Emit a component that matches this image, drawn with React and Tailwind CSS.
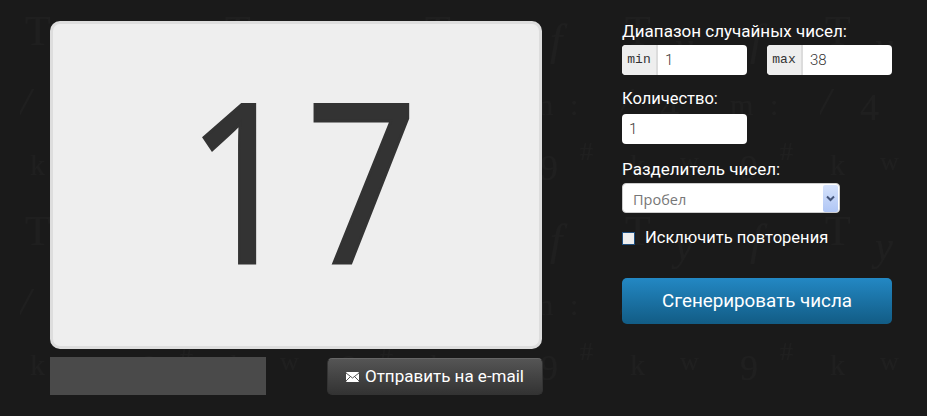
import React from "react";

const uiFont = { fontFamily: '"Roboto", "Noto Sans", sans-serif' };

const NumberField = ({ prefix, value }) => (
  <div className="flex h-[30px] w-[125px] overflow-hidden rounded-[4px] bg-white">
    <span className="flex w-[36px] items-center justify-center border-r-2 border-[#dcdcdc] bg-[#eeeeee] font-['Liberation_Mono',monospace] text-[13px] text-[#333333]">
      {prefix}
    </span>
    <span className="flex flex-1 items-center pl-[7px] text-[15px] font-light text-[#333333]">{value}</span>
  </div>
);

const Label = ({ children }) => (
  <div className="text-[17px] leading-[20px] text-white">{children}</div>
);

// faint glyph wallpaper, tile repeats every 200px
const Wallpaper = () => (
  <svg aria-hidden="true" className="absolute inset-0" width="927" height="416">
    <defs>
      <pattern id="glyphs" width="200" height="200" patternUnits="userSpaceOnUse" x="20" y="15">
        <g fill="#1f1f1f" fontFamily="Liberation Serif, serif">
          <text x="5" y="30" fontSize="42">T</text>
          <text x="55" y="45" fontSize="40" fontStyle="italic">y</text>
          <text x="130" y="40" fontSize="44" fontStyle="italic">f</text>
          <text x="0" y="100" fontSize="40" fontStyle="italic">/</text>
          <text x="40" y="105" fontSize="38">4</text>
          <text x="110" y="100" fontSize="30">m</text>
          <text x="150" y="100" fontSize="30">:</text>
          <text x="10" y="160" fontSize="30">k</text>
          <text x="60" y="155" fontSize="26">w</text>
          <text x="120" y="165" fontSize="36">9</text>
          <text x="160" y="145" fontSize="26">#</text>
        </g>
      </pattern>
    </defs>
    <rect width="927" height="416" fill="url(#glyphs)" />
  </svg>
);

const App = () => {
  return (
    <div style={uiFont} className="relative flex h-[416px] w-[927px] overflow-hidden bg-[#1a1a1a]">
      <Wallpaper />

      {/* left column */}
      <div className="relative ml-[50px] mt-[21px] flex w-[493px] flex-col">
        <div className="flex h-[328px] w-[492px] items-center justify-center rounded-[10px] border-[3px] border-[#dddddd] bg-[#eeeeee] pb-[16px] pl-[20px]">
          <span className="scale-x-[0.88] font-['Open_Sans',sans-serif] text-[222px] font-medium leading-none tracking-[9px] text-[#333333] [-webkit-text-stroke:3px_#333333]">17</span>
        </div>
        <div className="mt-[8px] flex items-start justify-between">
          <div className="h-[38px] w-[216px] bg-[#4a4a4a]" />
          <button className="mt-[1px] flex h-[37px] w-[216px] items-center justify-center gap-[6px] rounded-[5px] border border-[#333333] border-t-[#666666] bg-gradient-to-b from-[#555555] to-[#333333] text-[17px] text-white">
            <svg width="13" height="10" viewBox="0 0 13 10">
              <rect width="13" height="10" rx="1" fill="#ffffff" />
              <path d="M0 1l6.5 5L13 1M0 9l4.5-4.5M13 9L8.500 4.500" stroke="#555555" strokeWidth="1" fill="none" />
            </svg>
            Отправить на e-mail
          </button>
        </div>
      </div>

      {/* right column */}
      <div className="relative ml-[79px] mt-[21px] flex w-[270px] flex-col">
        <Label>Диапазон случайных чисел:</Label>
        <div className="mt-[4px] flex gap-[20px]">
          <NumberField prefix="min" value="1" />
          <NumberField prefix="max" value="38" />
        </div>
        <div className="mt-[14px] text-[16.500px] leading-[20px] text-white">Количество:</div>
        <div className="mt-[5px] flex h-[30px] w-[125px] items-center rounded-[4px] bg-white pl-[7px] text-[15px] font-light text-[#333333]">1</div>
        <div className="mt-[15px]"><Label>Разделитель чисел:</Label></div>
        <div className="mt-[4px] flex h-[30px] w-[218px] items-center justify-between rounded-[4px] border border-[#cccccc] bg-white pl-[10px] pr-[1px] font-['Open_Sans',sans-serif] text-[14.500px] text-[#777777]">
          <span className="pt-[3px]">Пробел</span>
          <span className="flex h-[27px] w-[15px] items-center justify-center rounded-[2px] bg-gradient-to-b from-[#d5e2fb] to-[#b0c6f5]">
            <svg width="9" height="7" viewBox="0 0 9 7">
              <path d="M1 1.500l3.500 3.500L8 1.500" stroke="#44557a" strokeWidth="2" fill="none" />
            </svg>
          </span>
        </div>
        <div className="mt-[15px] flex items-center gap-[10px]">
          <span className="h-[13px] w-[13px] border border-[#1f4f7f] bg-[#eeeeee]" />
          <span className="text-[16.500px] leading-[20px] text-white">Исключить повторения</span>
        </div>
        <button className="mt-[30px] h-[46px] w-[270px] rounded-[5px] bg-gradient-to-b from-[#2388c4] to-[#125c85] text-[18.800px] text-white">
          Сгенерировать числа
        </button>
      </div>
    </div>
  );
};

export default App;
